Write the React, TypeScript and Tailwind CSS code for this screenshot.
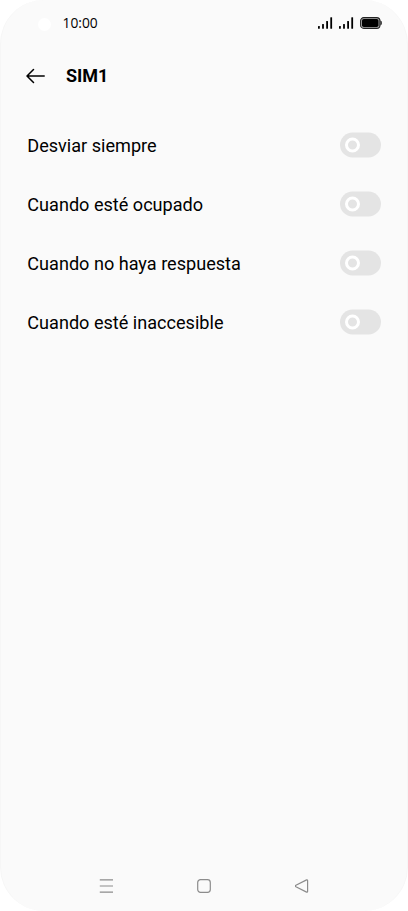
import { useState } from 'react';

const OPTIONS = [
    { id: 'always', label: 'Desviar siempre', enabled: false },
    { id: 'busy', label: 'Cuando esté ocupado', enabled: false },
    { id: 'unanswered', label: 'Cuando no haya respuesta', enabled: false },
    { id: 'unreachable', label: 'Cuando esté inaccesible', enabled: false },
];

function SignalIcon() {
    return (
        <svg width="15" height="12" viewBox="0 0 15 12" fill="#000">
            <rect x="0" y="8.9" width="1.8" height="2.8" rx=".5" />
            <rect x="4.1" y="7" width="1.8" height="4.7" rx=".5" />
            <rect x="8.2" y="4" width="1.8" height="7.7" rx=".5" />
            <rect x="12.3" y=".2" width="1.8" height="11.5" rx=".5" />
        </svg>
    );
}

function BatteryIcon() {
    return (
        <svg width="22" height="12" viewBox="0 0 22 12" fill="none">
            <rect x=".6" y=".6" width="19.3" height="10.8" rx="3.2" fill="#aaa" stroke="#222" strokeWidth="1.1" />
            <rect x="2" y="2" width="16.5" height="8" rx="1.8" fill="#000" />
            <path d="M20.5 3.8c1.8.6 1.8 3.8 0 4.4z" fill="#333" stroke="#333" strokeWidth=".5" />
        </svg>
    );
}

export default function App() {
    const [options, setOptions] = useState(OPTIONS);

    const toggleOption = (id: string) => {
        setOptions(options.map(o => (o.id === id ? { ...o, enabled: !o.enabled } : o)));
    };

    return (
        <div className="w-[408px] h-[911px] bg-white font-['Roboto',sans-serif] text-black">
            <div className="flex h-full flex-col overflow-hidden rounded-[44px] border-x border-[#f6f6f6] bg-[#fafafa]">
                <div className="flex h-[46px] shrink-0 items-center pl-[36.5px] pr-[25px]">
                    <div className="mt-[3px] size-[13px] rounded-full bg-white" />
                    <span className="ml-3 font-['Open_Sans',sans-serif] text-[13.8px] leading-5">10:00</span>
                    <div className="ml-auto flex items-center gap-[6px]">
                        <SignalIcon />
                        <SignalIcon />
                        <BatteryIcon />
                    </div>
                </div>

                <header className="flex h-[60px] shrink-0 items-center pl-[25px]">
                    <button aria-label="Atrás">
                        <svg width="20" height="16" viewBox="0 0 20 16" fill="none" stroke="#000" strokeWidth="1.5" strokeLinecap="round" strokeLinejoin="round">
                            <path d="M7.5 1.5L1 8l6.5 6.5M1.2 8h17" />
                        </svg>
                    </button>
                    <h1 className="ml-5 text-lg font-bold">SIM1</h1>
                </header>

                <main className="flex-1 pt-[10px]">
                    {options.map((option) => (
                        <div key={option.id} className="flex h-[59px] items-center justify-between pl-[26.3px] pr-[26px]">
                            <span className="text-[18.1px] leading-7">{option.label}</span>
                            <button
                                role="switch"
                                aria-checked={option.enabled}
                                aria-label={option.label}
                                onClick={() => toggleOption(option.id)}
                                className={`flex h-[25px] w-[41px] -translate-y-[0.5px] items-center rounded-full px-[5px] ${option.enabled ? 'justify-end bg-green-500' : 'bg-[#e4e4e4]'}`}
                            >
                                <span className="size-[15px] rounded-full border-[3px] border-white" />
                            </button>
                        </div>
                    ))}
                </main>

                <nav className="flex h-[50px] shrink-0 items-center justify-between px-[98px]">
                    <svg width="14" height="14" viewBox="0 0 14 14" stroke="#8c8c8c" strokeWidth="1.2">
                        <path d="M.8 .8H14M.8 7H14M.8 13.2H14" />
                    </svg>
                    <svg width="14" height="14" viewBox="0 0 14 14" fill="none" stroke="#8c8c8c" strokeWidth="1.2">
                        <rect x=".7" y=".7" width="12.6" height="12.6" rx="2.8" />
                    </svg>
                    <svg width="14" height="14" viewBox="0 0 14 14" fill="none" stroke="#8c8c8c" strokeWidth="1.2" strokeLinejoin="round">
                        <path d="M11.6 .9L.9 6.3q-1 .7 0 1.4l10.7 5.4q1 .3 1-.8V1.7q0-1.1-1-.8z" />
                    </svg>
                </nav>
            </div>
        </div>
    );
}
